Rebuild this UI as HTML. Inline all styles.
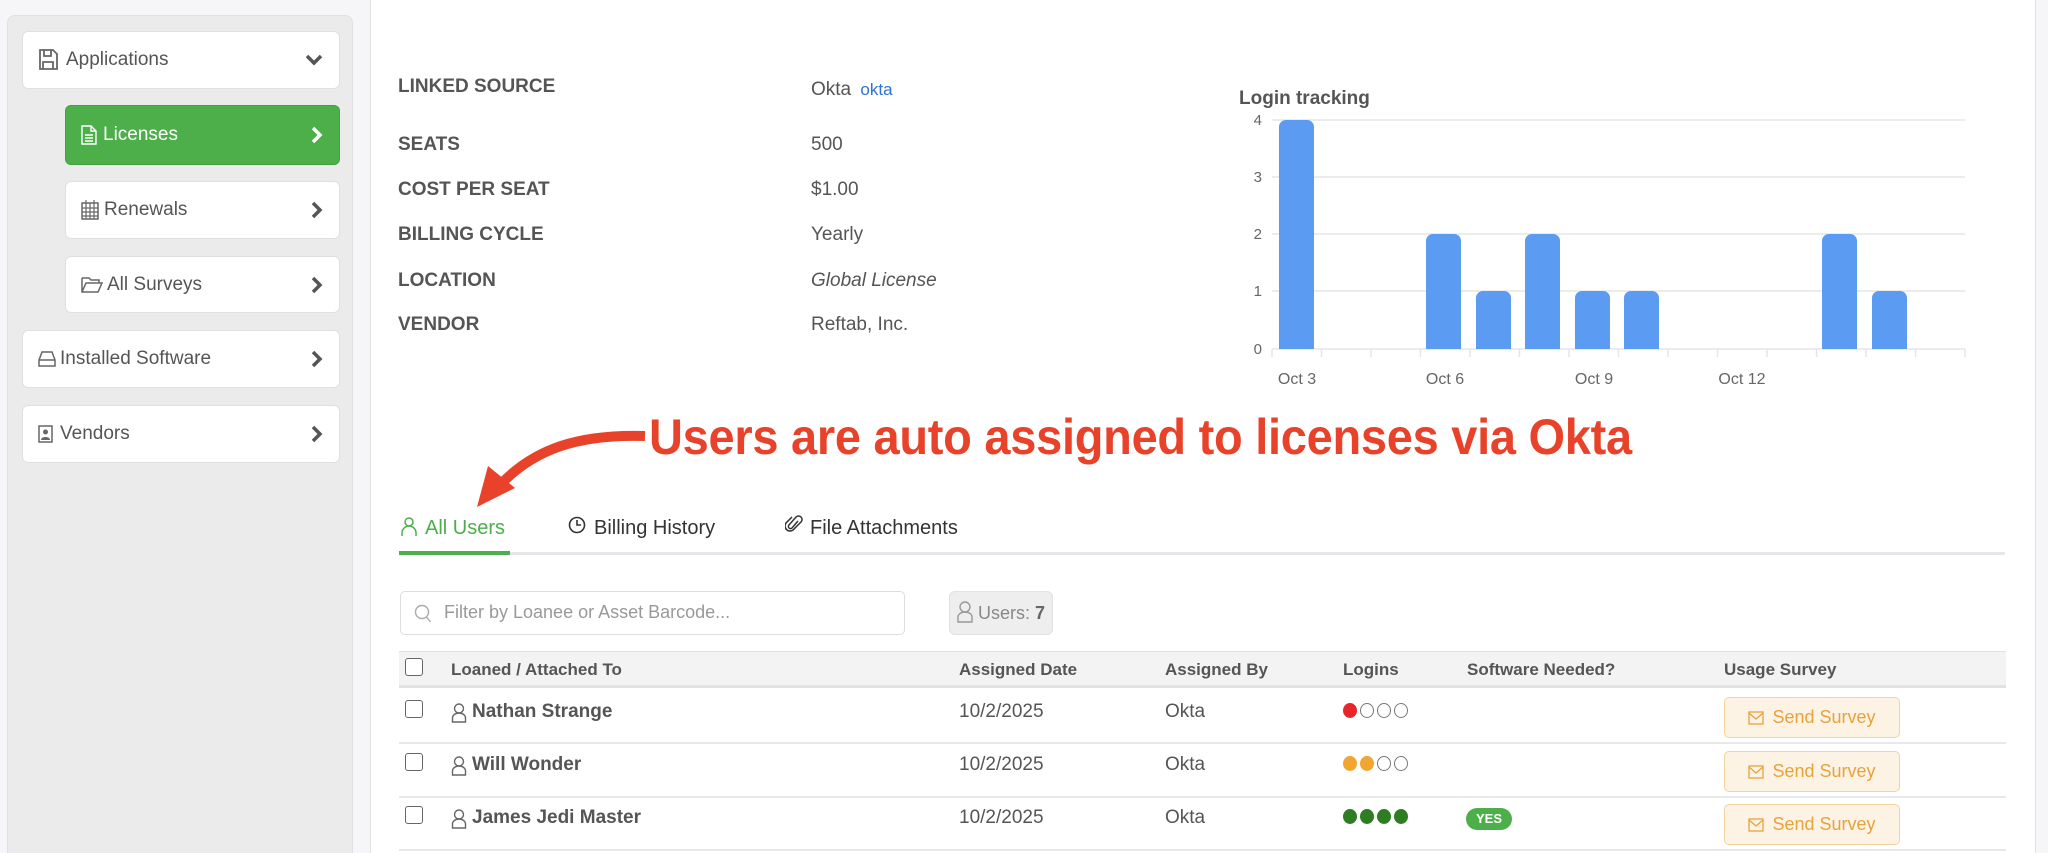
<!DOCTYPE html>
<html><head><meta charset="utf-8"><style>
*{box-sizing:border-box;margin:0;padding:0}
html,body{overflow:hidden}
body{width:2048px;height:853px;background:#f6f6f8;font-family:"Liberation Sans",Arial,sans-serif;color:#555;position:relative}
.abs{position:absolute}
.side{left:7px;top:15px;width:346px;height:838px;background:#ebebeb;border:1px solid #e0e0e0;border-bottom:none;border-radius:8px 8px 0 0}
.main{left:370px;top:0;width:1666px;height:853px;background:#fff;border-left:1px solid #e2e2e2;border-right:1px solid #e2e2e2}
.nav{position:absolute;background:#fff;border:1px solid #e0e0e0;border-radius:6px;font-size:19px;color:#555;display:flex;align-items:center}
.nav .t{position:absolute;top:50%;transform:translateY(-50%)}
.nav .chev{position:absolute;right:16px;top:50%;transform:translateY(-50%)}
.lbl{position:absolute;left:398px;font-size:19px;font-weight:bold;color:#555}
.val{position:absolute;left:811px;font-size:19px;color:#555}
.th{position:absolute;top:660px;font-size:17px;font-weight:bold;color:#555}
.td{position:absolute;font-size:19px;color:#555}
.cb{position:absolute;left:405px;width:18px;height:18px;border:1.5px solid #666;border-radius:3px;background:#fff}
.btn{position:absolute;left:1724px;width:176px;height:41px;background:#fdf3e4;border:1.5px solid #f3d3a0;border-radius:5px;color:#e8a23c;font-size:18px;display:flex;align-items:center;justify-content:center;gap:8px}
.dot{display:inline-block;width:14px;height:15px;border-radius:50%;margin-right:3px;border:1.5px solid #777}
</style></head><body>
<div class="abs side"></div>
<div class="abs main"></div>

<div class="nav" style="left:22px;top:31px;width:318px;height:58px">
 <svg class="t" style="left:15px" width="20" height="22" viewBox="0 0 20 22"><path d="M2 1h13l4 4v15H2z M6 1v6h7V1 M5 20v-7h10v7" fill="none" stroke="#666" stroke-width="1.8"/></svg>
 <span class="t" style="left:43px">Applications</span>
 <svg class="chev" width="18" height="12" viewBox="0 0 18 12"><path d="M2 2l7 7 7-7" fill="none" stroke="#555" stroke-width="3.5"/></svg>
</div>
<div class="nav" style="left:65px;top:105px;width:275px;height:60px;background:#4caf4a;border-color:#43a043;color:#fff">
 <svg class="t" style="left:15px" width="16" height="20" viewBox="0 0 16 20"><path d="M1 1h9l5 5v13H1z M10 1v5h5 M4 10h8 M4 13h8 M4 16h8" fill="none" stroke="#fff" stroke-width="1.4"/></svg>
 <span class="t" style="left:37px">Licenses</span>
 <svg class="chev" width="12" height="18" viewBox="0 0 12 18"><path d="M2 2l7 7-7 7" fill="none" stroke="#fff" stroke-width="3.5"/></svg>
</div>
<div class="nav" style="left:65px;top:181px;width:275px;height:58px">
 <svg class="t" style="left:15px" width="18" height="20" viewBox="0 0 18 20"><rect x="1" y="3" width="16" height="16" fill="none" stroke="#666" stroke-width="1.5"/><path d="M1 8h16M1 12h16M1 16h16M5 3v16M9 3v16M13 3v16M5 0v4M13 0v4" stroke="#666" stroke-width="1.2"/></svg>
 <span class="t" style="left:38px">Renewals</span>
 <svg class="chev" width="12" height="18" viewBox="0 0 12 18"><path d="M2 2l7 7-7 7" fill="none" stroke="#555" stroke-width="3.5"/></svg>
</div>
<div class="nav" style="left:65px;top:256px;width:275px;height:57px">
 <svg class="t" style="left:15px" width="22" height="18" viewBox="0 0 22 18"><path d="M1 2h7l2 2h8v3 M1 2v14h16l4-9H5L1 16" fill="none" stroke="#666" stroke-width="1.5"/></svg>
 <span class="t" style="left:41px">All Surveys</span>
 <svg class="chev" width="12" height="18" viewBox="0 0 12 18"><path d="M2 2l7 7-7 7" fill="none" stroke="#555" stroke-width="3.5"/></svg>
</div>
<div class="nav" style="left:22px;top:330px;width:318px;height:58px">
 <svg class="t" style="left:15px" width="18" height="16" viewBox="0 0 18 16"><path d="M1 9l3-8h10l3 8v6H1z M1 9h16" fill="none" stroke="#666" stroke-width="1.5"/></svg>
 <span class="t" style="left:37px">Installed Software</span>
 <svg class="chev" width="12" height="18" viewBox="0 0 12 18"><path d="M2 2l7 7-7 7" fill="none" stroke="#555" stroke-width="3.5"/></svg>
</div>
<div class="nav" style="left:22px;top:405px;width:318px;height:58px">
 <svg class="t" style="left:15px" width="16" height="18" viewBox="0 0 16 18"><rect x="1" y="1" width="13" height="16" fill="none" stroke="#666" stroke-width="1.5"/><circle cx="7.5" cy="7" r="2.5" fill="#666"/><path d="M3 15c0-4 9-4 9 0z" fill="#666"/></svg>
 <span class="t" style="left:37px">Vendors</span>
 <svg class="chev" width="12" height="18" viewBox="0 0 12 18"><path d="M2 2l7 7-7 7" fill="none" stroke="#555" stroke-width="3.5"/></svg>
</div>

<div class="lbl" style="top:76px">LINKED SOURCE</div>
<div class="val" style="top:79px">Okta <span style="color:#2a72d8;font-size:17px;margin-left:4px">okta</span></div>
<div class="lbl" style="top:134px">SEATS</div><div class="val" style="top:134px">500</div>
<div class="lbl" style="top:179px">COST PER SEAT</div><div class="val" style="top:179px">$1.00</div>
<div class="lbl" style="top:224px">BILLING CYCLE</div><div class="val" style="top:224px">Yearly</div>
<div class="lbl" style="top:270px">LOCATION</div><div class="val" style="top:270px;font-style:italic">Global License</div>
<div class="lbl" style="top:314px">VENDOR</div><div class="val" style="top:314px">Reftab, Inc.</div>

<svg class="abs" style="left:1230px;top:80px" width="760" height="320" viewBox="1230 80 760 320">
 <text x="1239" y="104" font-family="Liberation Sans" font-weight="bold" font-size="19" fill="#555">Login tracking</text>
 <g stroke="#e6e6e6" stroke-width="1.5">
  <line x1="1272" y1="120" x2="1965" y2="120"/><line x1="1272" y1="177" x2="1965" y2="177"/>
  <line x1="1272" y1="234" x2="1965" y2="234"/><line x1="1272" y1="291" x2="1965" y2="291"/>
  <line x1="1272" y1="349" x2="1965" y2="349"/>
  <line x1="1272.0" y1="349" x2="1272.0" y2="357"/><line x1="1321.5" y1="349" x2="1321.5" y2="357"/><line x1="1371" y1="349" x2="1371" y2="357"/><line x1="1420.5" y1="349" x2="1420.5" y2="357"/><line x1="1470" y1="349" x2="1470" y2="357"/><line x1="1519.5" y1="349" x2="1519.5" y2="357"/><line x1="1569" y1="349" x2="1569" y2="357"/><line x1="1618.5" y1="349" x2="1618.5" y2="357"/><line x1="1668" y1="349" x2="1668" y2="357"/><line x1="1717.5" y1="349" x2="1717.5" y2="357"/><line x1="1767" y1="349" x2="1767" y2="357"/><line x1="1816.5" y1="349" x2="1816.5" y2="357"/><line x1="1866" y1="349" x2="1866" y2="357"/><line x1="1915.5" y1="349" x2="1915.5" y2="357"/><line x1="1965" y1="349" x2="1965" y2="357"/>
 </g>
 <g font-family="Liberation Sans" font-size="15" fill="#666" text-anchor="end">
  <text x="1262" y="125">4</text><text x="1262" y="182">3</text><text x="1262" y="239">2</text><text x="1262" y="296">1</text><text x="1262" y="354">0</text>
 </g>
 <g fill="#5b9cf2">
  <path d="M1279 349V127a7 7 0 0 1 7-7h21a7 7 0 0 1 7 7v222z" />
  <path d="M1426 349V241a7 7 0 0 1 7-7h21a7 7 0 0 1 7 7v108z"/>
  <path d="M1476 349V298a7 7 0 0 1 7-7h21a7 7 0 0 1 7 7v51z"/>
  <path d="M1525 349V241a7 7 0 0 1 7-7h21a7 7 0 0 1 7 7v108z"/>
  <path d="M1575 349V298a7 7 0 0 1 7-7h21a7 7 0 0 1 7 7v51z"/>
  <path d="M1624 349V298a7 7 0 0 1 7-7h21a7 7 0 0 1 7 7v51z"/>
  <path d="M1822 349V241a7 7 0 0 1 7-7h21a7 7 0 0 1 7 7v108z"/>
  <path d="M1872 349V298a7 7 0 0 1 7-7h21a7 7 0 0 1 7 7v51z"/>
 </g>
 <g font-family="Liberation Sans" font-size="16" fill="#666" text-anchor="middle">
  <text x="1297" y="384">Oct 3</text><text x="1445" y="384">Oct 6</text><text x="1594" y="384">Oct 9</text><text x="1742" y="384">Oct 12</text>
 </g>
</svg>

<div class="abs" style="left:649px;top:408px;font-size:50px;font-weight:bold;color:#e8432a;white-space:nowrap;transform:scaleX(0.94);transform-origin:0 0;letter-spacing:-0.3px">Users are auto assigned to licenses via Okta</div>
<svg class="abs" style="left:460px;top:420px" width="200" height="100" viewBox="460 420 200 100">
 <path d="M645 436C580 434 535 448 500 485" fill="none" stroke="#e8432a" stroke-width="10"/>
 <path d="M477 507L488 466L515 488z" fill="#e8432a"/>
</svg>

<svg class="abs" style="left:401px;top:517px" width="16" height="20" viewBox="0 0 16 20"><circle cx="8" cy="5" r="4" fill="none" stroke="#4caf4a" stroke-width="1.5"/><path d="M1 19v-3a6 6 0 0 1 14 0v3" fill="none" stroke="#4caf4a" stroke-width="1.5"/></svg>
<div class="abs" style="left:425px;top:517px;font-size:20px;color:#4caf4a">All Users</div>
<svg class="abs" style="left:568px;top:516px" width="18" height="18" viewBox="0 0 18 18"><circle cx="9" cy="9" r="7.5" fill="none" stroke="#333" stroke-width="1.6"/><path d="M9 4v5h4" fill="none" stroke="#333" stroke-width="1.6"/></svg>
<div class="abs" style="left:594px;top:517px;font-size:20px;color:#333">Billing History</div>
<svg class="abs" style="left:785px;top:514px" width="18" height="20" viewBox="0 0 18 20"><path d="M13 7l-6 7a2 2 0 0 1-3-3l7-8a3.5 3.5 0 0 1 5 5l-8 8a5 5 0 0 1-7-7l6-6" fill="none" stroke="#333" stroke-width="1.5"/></svg>
<div class="abs" style="left:810px;top:517px;font-size:20px;color:#333">File Attachments</div>
<div class="abs" style="left:399px;top:552px;width:1606px;height:3px;background:#e6e6ea"></div>
<div class="abs" style="left:399px;top:551px;width:111px;height:4px;background:#4caf4a"></div>

<div class="abs" style="left:400px;top:591px;width:505px;height:44px;border:1.5px solid #ddd;border-radius:5px;background:#fff"></div>
<svg class="abs" style="left:414px;top:604px" width="18" height="20" viewBox="0 0 18 20"><circle cx="8" cy="8" r="6.5" fill="none" stroke="#aaa" stroke-width="1.4"/><path d="M12.5 13l4 5" stroke="#aaa" stroke-width="1.4"/></svg>
<div class="abs" style="left:444px;top:602px;font-size:18px;color:#999">Filter by Loanee or Asset Barcode...</div>
<div class="abs" style="left:949px;top:591px;width:104px;height:44px;background:#eee;border:1px solid #e2e2e2;border-radius:6px;font-size:18px;color:#888;padding:11px 0 0 28px">Users: <b style="color:#666">7</b></div>
<svg class="abs" style="left:957px;top:601px" width="16" height="22" viewBox="0 0 16 22"><circle cx="8" cy="6" r="5" fill="none" stroke="#999" stroke-width="1.4"/><path d="M1 21v-5a7 5 0 0 1 14 0v5z" fill="none" stroke="#999" stroke-width="1.4"/></svg>

<div class="abs" style="left:399px;top:651px;width:1607px;height:37px;background:#f3f3f3;border-top:1.5px solid #e0e0e0;border-bottom:3px solid #e2e2e2"></div>
<div class="cb" style="top:658px"></div>
<div class="th" style="left:451px">Loaned / Attached To</div>
<div class="th" style="left:959px">Assigned Date</div>
<div class="th" style="left:1165px">Assigned By</div>
<div class="th" style="left:1343px">Logins</div>
<div class="th" style="left:1467px">Software Needed?</div>
<div class="th" style="left:1724px">Usage Survey</div>

<div class="abs" style="left:399px;top:742px;width:1607px;height:2px;background:#e8e8e8"></div>
<div class="abs" style="left:399px;top:796px;width:1607px;height:2px;background:#e8e8e8"></div>
<div class="abs" style="left:399px;top:849px;width:1607px;height:2px;background:#e8e8e8"></div>

<div class="cb" style="top:700px"></div>
<svg class="abs" style="left:451px;top:703px" width="16" height="20" viewBox="0 0 16 20"><circle cx="8" cy="5.5" r="4.5" fill="none" stroke="#666" stroke-width="1.4"/><path d="M1.5 19v-4a6.5 5 0 0 1 13 0v4z" fill="none" stroke="#666" stroke-width="1.4"/></svg>
<div class="td" style="left:472px;top:701px;font-weight:bold">Nathan Strange</div>
<div class="td" style="left:959px;top:701px">10/2/2025</div>
<div class="td" style="left:1165px;top:701px">Okta</div>
<div class="td" style="left:1343px;top:703px;line-height:0"><span class="dot" style="background:#e8262a;border-color:#e8262a"></span><span class="dot"></span><span class="dot"></span><span class="dot"></span></div>
<div class="btn" style="top:697px"><svg width="16" height="14" viewBox="0 0 16 14"><rect x="1" y="1" width="14" height="12" fill="none" stroke="#e8a23c" stroke-width="1.3"/><path d="M1 2l7 6 7-6" fill="none" stroke="#e8a23c" stroke-width="1.3"/></svg>Send Survey</div>

<div class="cb" style="top:753px"></div>
<svg class="abs" style="left:451px;top:756px" width="16" height="20" viewBox="0 0 16 20"><circle cx="8" cy="5.5" r="4.5" fill="none" stroke="#666" stroke-width="1.4"/><path d="M1.5 19v-4a6.5 5 0 0 1 13 0v4z" fill="none" stroke="#666" stroke-width="1.4"/></svg>
<div class="td" style="left:472px;top:754px;font-weight:bold">Will Wonder</div>
<div class="td" style="left:959px;top:754px">10/2/2025</div>
<div class="td" style="left:1165px;top:754px">Okta</div>
<div class="td" style="left:1343px;top:756px;line-height:0"><span class="dot" style="background:#f0a630;border-color:#f0a630"></span><span class="dot" style="background:#f0a630;border-color:#f0a630"></span><span class="dot"></span><span class="dot"></span></div>
<div class="btn" style="top:751px"><svg width="16" height="14" viewBox="0 0 16 14"><rect x="1" y="1" width="14" height="12" fill="none" stroke="#e8a23c" stroke-width="1.3"/><path d="M1 2l7 6 7-6" fill="none" stroke="#e8a23c" stroke-width="1.3"/></svg>Send Survey</div>

<div class="cb" style="top:806px"></div>
<svg class="abs" style="left:451px;top:809px" width="16" height="20" viewBox="0 0 16 20"><circle cx="8" cy="5.5" r="4.5" fill="none" stroke="#666" stroke-width="1.4"/><path d="M1.5 19v-4a6.5 5 0 0 1 13 0v4z" fill="none" stroke="#666" stroke-width="1.4"/></svg>
<div class="td" style="left:472px;top:807px;font-weight:bold">James Jedi Master</div>
<div class="td" style="left:959px;top:807px">10/2/2025</div>
<div class="td" style="left:1165px;top:807px">Okta</div>
<div class="td" style="left:1343px;top:809px;line-height:0"><span class="dot" style="background:#2e7d22;border-color:#2e7d22"></span><span class="dot" style="background:#2e7d22;border-color:#2e7d22"></span><span class="dot" style="background:#2e7d22;border-color:#2e7d22"></span><span class="dot" style="background:#2e7d22;border-color:#2e7d22"></span></div>
<div class="abs" style="left:1466px;top:808px;width:46px;height:22px;border-radius:11px;background:#4caf4a;color:#fff;font-size:13px;font-weight:bold;text-align:center;line-height:22px">YES</div>
<div class="btn" style="top:804px"><svg width="16" height="14" viewBox="0 0 16 14"><rect x="1" y="1" width="14" height="12" fill="none" stroke="#e8a23c" stroke-width="1.3"/><path d="M1 2l7 6 7-6" fill="none" stroke="#e8a23c" stroke-width="1.3"/></svg>Send Survey</div>
</body></html>
